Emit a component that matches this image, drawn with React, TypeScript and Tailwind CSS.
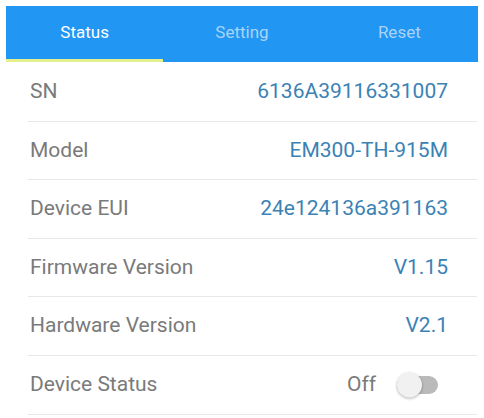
const rows = [
  { label: 'SN', value: '6136A39116331007' },
  { label: 'Model', value: 'EM300-TH-915M' },
  { label: 'Device EUI', value: '24e124136a391163' },
  { label: 'Firmware Version', value: 'V1.15' },
  { label: 'Hardware Version', value: 'V2.1' },
];

const tabs = ['Status', 'Setting', 'Reset'];

export default function App() {
  return (
    <div
      className="h-[418px] w-[484px] overflow-hidden bg-white"
      style={{ fontFamily: 'Roboto, "Liberation Sans", sans-serif' }}
    >
      {/* Pestañas */}
      <div className="mx-[6px] mt-[6px] flex h-[56px] bg-[#2196f3]">
        {tabs.map((t, i) => (
          <div key={t} className="relative flex flex-1 items-center justify-center pb-[3px]">
            <span className={`text-[17px] ${i === 0 ? 'text-white' : 'text-[#a9d4f8]'}`}>{t}</span>
            {i === 0 && <div className="absolute bottom-0 left-0 right-0 h-[3px] bg-[#e4ef8e]" />}
          </div>
        ))}
      </div>

      {/* Filas de estado */}
      <div className="ml-[28px] mr-[7px] pt-[1px]">
        {rows.map(r => (
          <div
            key={r.label}
            className="flex h-[58.6px] items-center justify-between border-b border-[#e8e8e8] pl-[2px] pr-[29px]"
          >
            <span className="text-[21px] text-[#7a7a7a]">{r.label}</span>
            <span className="text-[21px] text-[#3b82b5]">{r.value}</span>
          </div>
        ))}
        <div className="flex h-[58.6px] items-center justify-between border-b border-[#e8e8e8] pl-[2px] pr-[39px]">
          <span className="text-[21px] text-[#7a7a7a]">Device Status</span>
          <div className="flex items-center gap-[21px]">
            <span className="text-[21px] text-[#7a7a7a]">Off</span>
            <div className="relative h-[18px] w-[41px] rounded-full bg-[#bababa]">
              <div className="absolute left-0 top-1/2 size-[25px] -translate-y-1/2 rounded-full bg-[#f1f1f1] shadow-[0_1px_3px_rgba(0,0,0,0.3)]" />
            </div>
          </div>
        </div>
      </div>
    </div>
  );
}
